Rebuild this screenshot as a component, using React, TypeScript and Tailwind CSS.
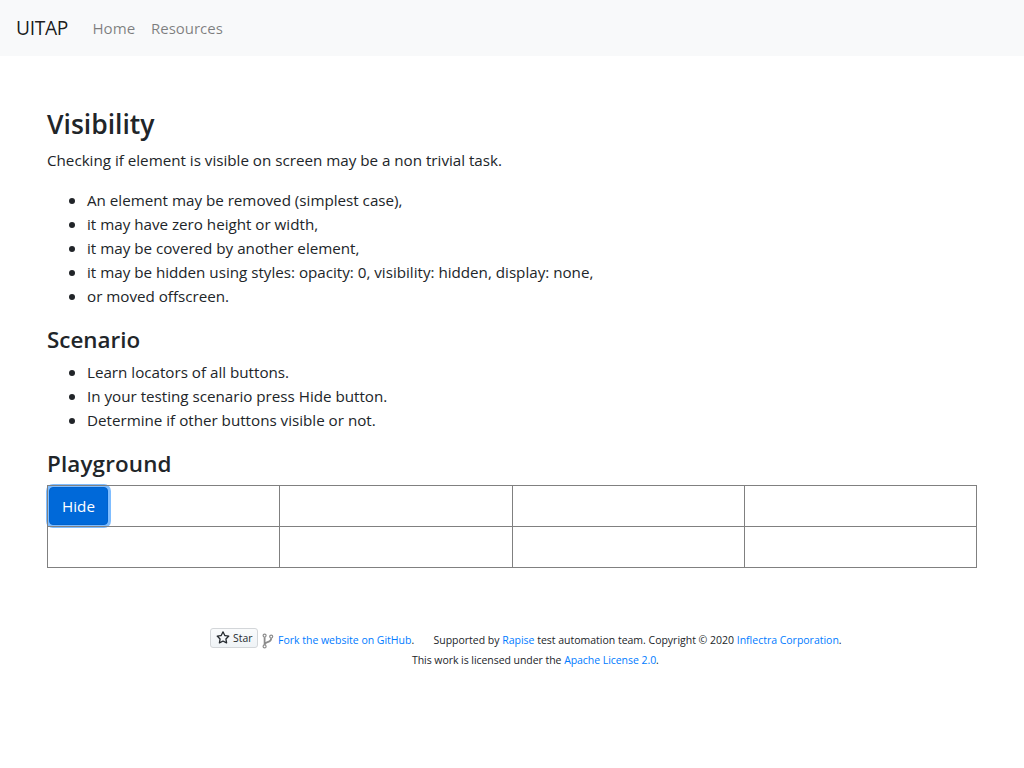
import type { ReactNode } from "react";

function Item({ children }: { children: ReactNode }) {
  return (
    <li className="relative before:absolute before:top-[10px] before:-left-[18px] before:size-[6px] before:rounded-full before:bg-[#212529]">
      {children}
    </li>
  );
}

function Link({ children }: { children: ReactNode }) {
  return (
    <a href="#" className="text-[#007bff]">
      {children}
    </a>
  );
}

function StarIcon() {
  return (
    <svg width="14" height="14" viewBox="0 0 16 16" fill="#24292e">
      <path d="M8 .25a.75.75 0 01.673.418l1.882 3.815 4.21.612a.75.75 0 01.416 1.279l-3.046 2.97.719 4.192a.75.75 0 01-1.088.791L8 12.347l-3.766 1.98a.75.75 0 01-1.088-.79l.72-4.194L.818 6.374a.75.75 0 01.416-1.28l4.21-.611L7.327.668A.75.75 0 018 .25zm0 2.445L6.615 5.5a.75.75 0 01-.564.41l-3.097.45 2.24 2.184a.75.75 0 01.216.664l-.528 3.084 2.769-1.456a.75.75 0 01.698 0l2.77 1.456-.53-3.084a.75.75 0 01.216-.664l2.24-2.183-3.096-.45a.75.75 0 01-.564-.41L8 2.694z" />
    </svg>
  );
}

function ForkIcon() {
  return (
    <svg width="12" height="16" viewBox="0 0 12 16" fill="none" stroke="#8c8c8c">
      <circle cx="2.6" cy="2.6" r="1.5" strokeWidth="1.2" />
      <circle cx="9.2" cy="3.6" r="1.5" strokeWidth="1.2" />
      <circle cx="2.6" cy="13.4" r="1.5" strokeWidth="1.2" />
      <path d="M2.6 4.2v7.6M9.2 5.2c0 3.6-2.2 3.2-4.4 4.2-1.3.5-2 1.2-2.2 2.4" strokeWidth="1.8" />
    </svg>
  );
}

export default function App() {
  return (
    <div className="h-[768px] overflow-hidden bg-white font-['Open_Sans','Noto_Sans',sans-serif] text-[15.2px] leading-6 tracking-[-0.01px] text-[#212529]">
      <nav className="flex h-14 items-center bg-[#f8f9fa] px-4 whitespace-nowrap">
        <a href="#" className="w-[76.5px] text-[19.2px] leading-[30px] tracking-[-0.3px] text-black/90">
          UITAP
        </a>
        <a href="#" className="w-[58.5px] text-[15.1px] text-black/50">Home</a>
        <a href="#" className="text-[15px] text-black/50">Resources</a>
      </nav>

      <main className="px-[47px] pt-[51px] whitespace-nowrap">
        <h3 className="mb-[7px] text-[26.5px] leading-[34px] font-semibold">Visibility</h3>
        <p className="mb-4">Checking if element is visible on screen may be a non trivial task.</p>
        <ul className="mb-[17px] pl-10">
          <Item>An element may be removed (simplest case),</Item>
          <Item>it may have zero height or width,</Item>
          <Item>it may be covered by another element,</Item>
          <Item>it may be hidden using styles: opacity: 0, visibility: hidden, display: none,</Item>
          <Item>or moved offscreen.</Item>
        </ul>
        <h4 className="mb-[6px] text-[22.4px] leading-[29px] font-semibold">Scenario</h4>
        <ul className="mb-[17px] pl-10">
          <Item>Learn locators of all buttons.</Item>
          <Item>In your testing scenario press Hide button.</Item>
          <Item>Determine if other buttons visible or not.</Item>
        </ul>
        <h4 className="mb-[7px] text-[22.4px] leading-[29px] font-semibold tracking-[0.15px]">Playground</h4>
        <table className="w-[930px] table-fixed border-collapse">
          <tbody>
            <tr className="h-[41px]">
              <td className="border border-[#808080] p-px">
                <button className="block h-[38px] w-[59px] rounded-[4px] border border-[#0062cc] bg-[#0069d9] text-white shadow-[0_0_0_3px_rgba(0,123,255,0.5)]">
                  Hide
                </button>
              </td>
              <td className="border border-[#808080]" />
              <td className="border border-[#808080]" />
              <td className="border border-[#808080]" />
            </tr>
            <tr className="h-[41px]">
              <td className="border border-[#808080]" />
              <td className="border border-[#808080]" />
              <td className="border border-[#808080]" />
              <td className="border border-[#808080]" />
            </tr>
          </tbody>
        </table>
      </main>

      <footer className="mt-[60px] text-[10.5px] leading-5 whitespace-nowrap">
        <div className="flex h-[22px] items-start pl-[210px]">
          <a
            href="#"
            className="flex h-5 w-12 items-center gap-[3px] rounded-[3px] border border-[#d3d6d9] bg-linear-to-b from-[#fafbfc] to-[#eff3f6] pl-[5px] text-[#24292e]"
          >
            <StarIcon />
            <span className="text-[10.4px]">Star</span>
          </a>
          <span className="mt-[5px] ml-1 w-4">
            <ForkIcon />
          </span>
          <span className="mt-[2px] w-[155.5px]">
            <Link>Fork the website on GitHub</Link>.
          </span>
          <span className="mt-[2px]">
            Supported by <Link>Rapise</Link> test automation team. Copyright © 2020{" "}
            <Link>Inflectra Corporation</Link>.
          </span>
        </div>
        <div className="pl-[412px] tracking-[-0.05px]">
          This work is licensed under the <Link>Apache License 2.0</Link>.
        </div>
      </footer>
    </div>
  );
}
